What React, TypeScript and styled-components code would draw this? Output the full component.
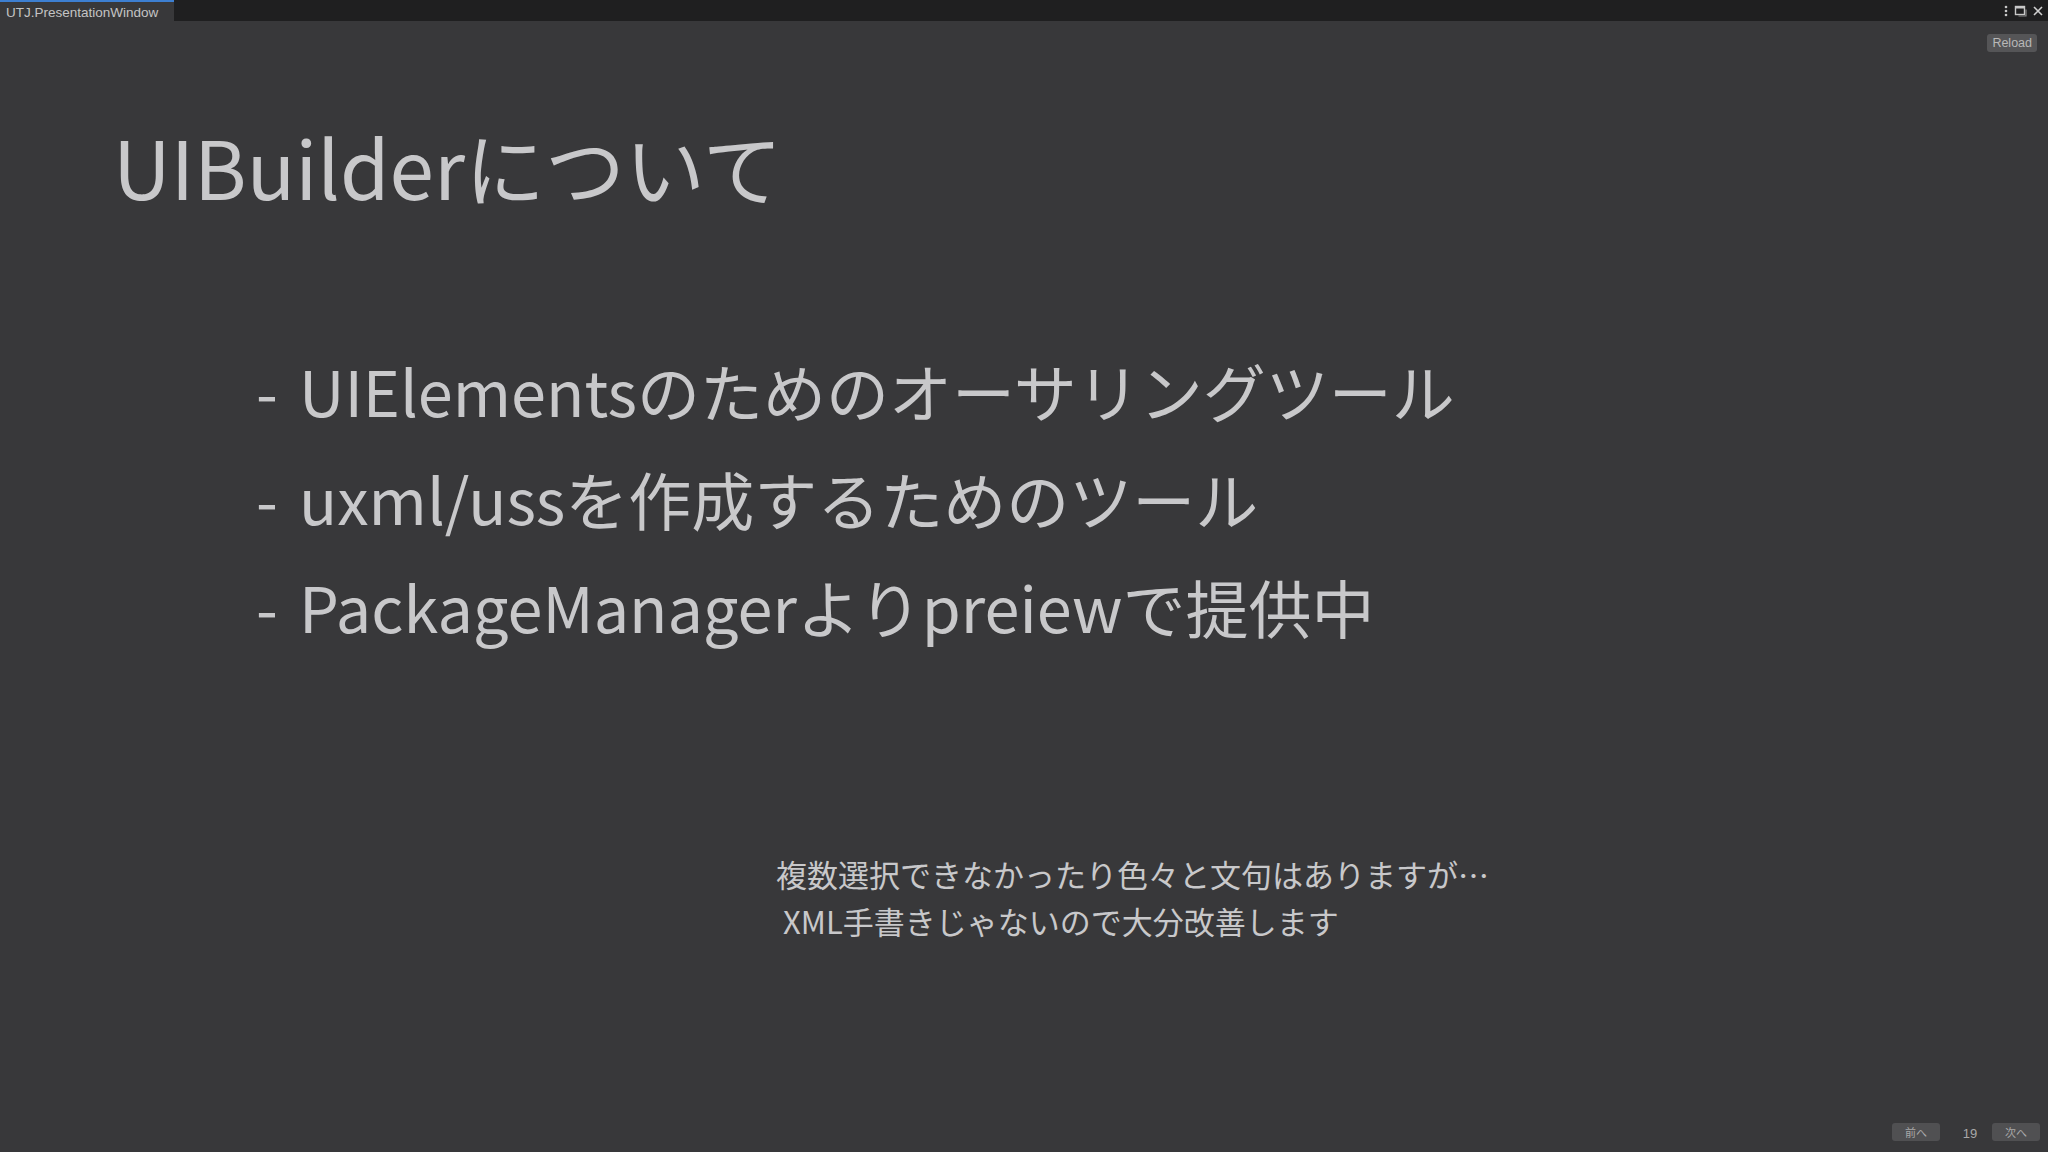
import React from "react";
import styled, { createGlobalStyle } from "styled-components";

const GlobalStyle = createGlobalStyle`
  html, body {
    margin: 0;
    padding: 0;
    background: #38383a;
  }
  body {
    font-family: "Noto Sans CJK JP", "Noto Sans", sans-serif;
  }
`;

const Window = styled.div`
  width: 2048px;
  height: 1152px;
  display: flex;
  flex-direction: column;
  background: #38383a;
  overflow: hidden;
`;

const TopBar = styled.div`
  height: 21px;
  flex: none;
  display: flex;
  align-items: stretch;
  background: #1f1f20;
`;

const Tab = styled.div`
  width: 174px;
  box-sizing: border-box;
  border-top: 2px solid #3d7fd1;
  background: #38383a;
  color: #c4c4c4;
  font-family: "Liberation Sans", Arial, sans-serif;
  font-size: 13.5px;
  display: flex;
  align-items: center;
  padding: 1px 0 0 6px;
`;

const BarIcons = styled.div`
  margin-left: auto;
  display: flex;
  align-items: center;
  gap: 4px;
  padding-right: 4px;
`;

const Main = styled.div`
  flex: 1;
  display: flex;
  flex-direction: column;
`;

const ToolRow = styled.div`
  display: flex;
  justify-content: flex-end;
  padding: 13px 11px 0 0;
`;

const SmallButton = styled.div`
  background: #555557;
  color: #b8b8b8;
  border-radius: 3px;
  font-family: "Liberation Sans", Arial, sans-serif;
  font-size: 12.5px;
  line-height: 18px;
  height: 18px;
  padding: 0 5px;
`;

const NavButton = styled(SmallButton)`
  width: 48px;
  box-sizing: border-box;
  text-align: center;
  font-family: "Noto Sans CJK JP", sans-serif;
  font-size: 11px;
  color: #a8a8a8;
  background: #505052;
`;

const Title = styled.h1`
  margin: 73px 0 0 113px;
  font-size: 80px;
  font-weight: 400;
  line-height: 80px;
  color: #c8c8ca;
`;

const BulletList = styled.ul`
  list-style: none;
  margin: 131px 0 0 256px;
  padding: 0;
`;

const Bullet = styled.li`
  font-size: 63px;
  line-height: 108px;
  color: #c8c8ca;
  white-space: pre;
`;

const Dash = styled.span`
  margin-right: 7px;
`;

const Note = styled.div`
  margin: 190px 0 0 776px;
  font-size: 31px;
  line-height: 47px;
  color: #c8c8ca;
  white-space: pre;
`;

const Footer = styled.div`
  margin-top: auto;
  display: flex;
  justify-content: flex-end;
  align-items: center;
  padding: 0 8px 11px 0;
`;

const PageNo = styled.span`
  width: 52px;
  text-align: center;
  font-family: "Liberation Sans", Arial, sans-serif;
  font-size: 13px;
  color: #a8a8a8;
  padding: 3px 0 0 8px;
  box-sizing: border-box;
`;

const bullets = [
  "UIElementsのためのオーサリングツール",
  "uxml/ussを作成するためのツール",
  "PackageManagerよりpreiewで提供中",
];

const Kebab = () => (
  <svg width="8" height="14" viewBox="0 0 8 14">
    <circle cx="4" cy="3" r="1.3" fill="#c8c8c8" />
    <circle cx="4" cy="7" r="1.3" fill="#c8c8c8" />
    <circle cx="4" cy="11" r="1.3" fill="#c8c8c8" />
  </svg>
);

const Maximize = () => (
  <svg width="14" height="14" viewBox="0 0 14 14">
    <rect x="1.5" y="2.5" width="9" height="8" fill="none" stroke="#c8c8c8" strokeWidth="1.4" />
    <rect x="1.5" y="2.5" width="9" height="2" fill="#c8c8c8" />
    <path d="M12 5.5 V12 H4.5" fill="none" stroke="#8a8a8a" strokeWidth="1.2" />
  </svg>
);

const Close = () => (
  <svg width="12" height="12" viewBox="0 0 12 12">
    <path d="M2 2 L10 10 M10 2 L2 10" stroke="#d0d0d0" strokeWidth="1.6" />
  </svg>
);

export default function App() {
  return (
    <>
      <GlobalStyle />
      <Window>
        <TopBar>
          <Tab>UTJ.PresentationWindow</Tab>
          <BarIcons>
            <Kebab />
            <Maximize />
            <Close />
          </BarIcons>
        </TopBar>
        <Main>
          <ToolRow>
            <SmallButton>Reload</SmallButton>
          </ToolRow>
          <Title>UIBuilderについて</Title>
          <BulletList>
            {bullets.map((b, i) => (
              <Bullet key={i}>
                <Dash>- </Dash>
                {b}
              </Bullet>
            ))}
          </BulletList>
          <Note>
            {"複数選択できなかったり色々と文句はありますが…\n XML手書きじゃないので大分改善します"}
          </Note>
          <Footer>
            <NavButton>前へ</NavButton>
            <PageNo>19</PageNo>
            <NavButton>次へ</NavButton>
          </Footer>
        </Main>
      </Window>
    </>
  );
}
